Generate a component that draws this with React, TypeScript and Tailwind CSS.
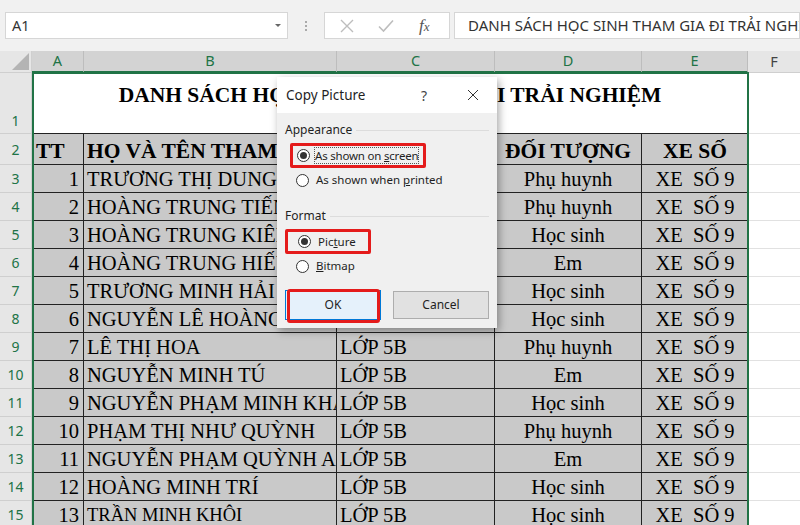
import React from 'react';

const rows: [number, string, string][] = [
  [1, 'TRƯƠNG THỊ DUNG', 'Phụ huynh'],
  [2, 'HOÀNG TRUNG TIẾN', 'Phụ huynh'],
  [3, 'HOÀNG TRUNG KIÊN', 'Học sinh'],
  [4, 'HOÀNG TRUNG HIẾU', 'Em'],
  [5, 'TRƯƠNG MINH HẢI', 'Học sinh'],
  [6, 'NGUYỄN LÊ HOÀNG NAM', 'Học sinh'],
  [7, 'LÊ THỊ HOA', 'Phụ huynh'],
  [8, 'NGUYỄN MINH TÚ', 'Em'],
  [9, 'NGUYỄN PHẠM MINH KHANG', 'Học sinh'],
  [10, 'PHẠM THỊ NHƯ QUỲNH', 'Phụ huynh'],
  [11, 'NGUYỄN PHẠM QUỲNH ANH', 'Em'],
  [12, 'HOÀNG MINH TRÍ', 'Học sinh'],
  [13, 'TRẦN MINH KHÔI', 'Học sinh'],
];

const serif = "font-['Liberation_Serif','Times_New_Roman',serif]";
const ui = "font-['Noto_Sans','Open_Sans',sans-serif]";

// gray table cell: bottom aligned like Excel
const cell = `bg-[#c9c9c9] border-b border-[#222] flex items-end pb-[1px] leading-[24px] whitespace-nowrap ${serif}`;

function Radio({ checked }: { checked?: boolean }) {
  return (
    <span className="w-[13px] h-[13px] rounded-full border border-[#333] bg-white flex items-center justify-center shrink-0">
      {checked && <span className="w-[7px] h-[7px] rounded-full bg-[#333]" />}
    </span>
  );
}

function RowHead({ n, tall }: { n: number; tall?: boolean }) {
  return (
    <div
      className={`bg-[#e6e6e6] border-b border-r border-[#cfcfcf] text-[#217346] text-[14px] flex justify-center ${ui} ${
        tall ? 'items-end pb-[2px]' : 'items-center'
      }`}
    >
      {n}
    </div>
  );
}

function Dialog() {
  return (
    <div className={`absolute left-[277px] top-[77px] w-[220px] h-[251px] bg-[#f0f0f0] shadow-[2px_3px_8px_rgba(0,0,0,0.35)] ${ui} text-[#1f1f1f]`}>
      {/* Title */}
      <div className="h-[36px] bg-white flex items-center pl-[9px] pr-[18px]">
        <span className="text-[13.5px] flex-1">Copy Picture</span>
        <span className="text-[14px] text-[#444] mr-[40px]">?</span>
        <svg width="12" height="12" viewBox="0 0 12 12" className="stroke-[#333]">
          <path d="M1 1 L11 11 M11 1 L1 11" strokeWidth="1" />
        </svg>
      </div>

      <div className="px-[8px] pt-[8px] text-[11.5px] whitespace-nowrap">
        <div className="flex items-center gap-[4px] text-[12px]">
          <span>Appearance</span>
          <span className="flex-1 h-px bg-[#dcdcdc]" />
        </div>
        <div className="mt-[4px] ml-[5px] w-[136px] h-[25px] border-[3px] border-[#e41b1b] rounded-[2px] flex items-center gap-[4px] pl-[4px]">
          <Radio checked />
          <span className="border border-dotted border-[#555] leading-[15px] tracking-[-0.2px]">
            As shown on <span className="underline">s</span>creen
          </span>
        </div>
        <div className="mt-[1px] ml-[11px] h-[22px] flex items-center gap-[7px]">
          <Radio />
          <span>
            As shown when <span className="underline">p</span>rinted
          </span>
        </div>

        <div className="mt-[16px] flex items-center gap-[4px] text-[12px]">
          <span>Format</span>
          <span className="flex-1 h-px bg-[#dcdcdc]" />
        </div>
        <div className="mt-[4px] w-[86px] h-[25px] border-[3px] border-[#e41b1b] rounded-[2px] flex items-center gap-[7px] pl-[10px]">
          <Radio checked />
          <span>
            Pic<span className="underline">t</span>ure
          </span>
        </div>
        <div className="mt-[1px] ml-[11px] h-[22px] flex items-center gap-[7px]">
          <Radio />
          <span>
            <span className="underline">B</span>itmap
          </span>
        </div>

        <div className="mt-[13px] flex items-center gap-[12px] text-[12px]">
          <div className="relative w-[96px] h-[30px] bg-[#e5f1fb] border border-[#0078d7] flex items-center justify-center">
            OK
            <div className="absolute left-[1px] -top-[2px] w-[93px] h-[34px] border-[3px] border-[#e41b1b] rounded-[3px]" />
          </div>
          <div className="w-[96px] h-[28px] bg-[#e1e1e1] border border-[#adadad] flex items-center justify-center">
            Cancel
          </div>
        </div>
      </div>
    </div>
  );
}

export default function App() {
  return (
    <div className="relative w-[800px] h-[525px] overflow-hidden bg-white">
      {/* Formula bar */}
      <div className={`h-[51px] bg-[#f1f1f1] flex items-start pt-[12px] ${ui}`}>
        <div className="ml-[5px] w-[283px] h-[27px] bg-white border border-[#d6d6d6] flex items-center pl-[6px] pr-[6px] text-[14.5px] text-[#333]">
          <span className="flex-1">A1</span>
          <span className="w-0 h-0 border-l-[3px] border-r-[3px] border-t-[3px] border-l-transparent border-r-transparent border-t-[#666]" />
        </div>
        <div className="w-[36px] h-[27px] flex flex-col items-center justify-center gap-[2px]">
          <span className="w-[2px] h-[2px] bg-[#aaa]" />
          <span className="w-[2px] h-[2px] bg-[#aaa]" />
          <span className="w-[2px] h-[2px] bg-[#aaa]" />
        </div>
        <div className="w-[126px] h-[27px] bg-white border border-[#d6d6d6] flex items-center">
          <svg width="14" height="14" viewBox="0 0 14 14" className="ml-[15px]">
            <path d="M1 1 L13 13 M13 1 L1 13" stroke="#bdbdbd" strokeWidth="1.4" fill="none" />
          </svg>
          <svg width="16" height="14" viewBox="0 0 16 14" className="ml-[24px]">
            <path d="M1 7.5 L5.5 12 L15 1.5" stroke="#bdbdbd" strokeWidth="1.6" fill="none" />
          </svg>
          <span className={`ml-[25px] text-[17px] italic text-[#555] ${serif}`}>
            f<span className="text-[13px]">x</span>
          </span>
        </div>
        <div className="ml-[4px] flex-1 h-[27px] bg-white border border-[#d6d6d6] flex items-center pl-[13px] text-[15px] text-[#333] whitespace-nowrap overflow-hidden">
          DANH SÁCH HỌC SINH THAM GIA ĐI TRẢI NGHIỆM
        </div>
      </div>

      {/* Sheet */}
      <div className="grid grid-cols-[32px_52px_253px_158px_147px_106px_1fr] grid-rows-[22px_61px_31px_repeat(13,28px)]">
        {/* Column headers */}
        <div className="bg-[#e6e6e6] border-r border-b border-[#cfcfcf] relative">
          <svg className="absolute right-[2px] bottom-[2px]" width="17" height="17" viewBox="0 0 17 17">
            <path d="M17 0 L17 17 L0 17 Z" fill="#b4b4b4" />
          </svg>
        </div>
        {['A', 'B', 'C', 'D', 'E'].map((c) => (
          <div
            key={c}
            className={`bg-[#d3d3d3] border-r border-[#bdbdbd] border-b-2 border-b-[#217346] text-[#217346] text-[14.5px] flex items-center justify-center ${ui}`}
          >
            {c}
          </div>
        ))}
        <div className={`bg-[#e6e6e6] border-b border-[#cfcfcf] text-[#444] text-[14.5px] flex items-center justify-center ${ui}`}>F</div>

        {/* Row 1 */}
        <RowHead n={1} tall />
        <div className={`col-span-5 bg-white border-b border-[#222] flex justify-center pt-[10px] leading-[24px] text-[21.5px] font-bold text-black whitespace-nowrap ${serif}`}>
          DANH SÁCH HỌC SINH THAM GIA ĐI TRẢI NGHIỆM
        </div>
        <div className="border-b border-[#e1e1e1]" />

        {/* Row 2 */}
        <RowHead n={2} />
        <div className={`${cell} border-r pl-[4px] text-[21.5px] font-bold`}>TT</div>
        <div className={`${cell} border-r pl-[3px] text-[21.5px] font-bold overflow-hidden`}>HỌ VÀ TÊN THAM GIA</div>
        <div className={`${cell} border-r justify-center text-[21.5px] font-bold`}>LỚP</div>
        <div className={`${cell} border-r justify-center text-[21.5px] font-bold`}>ĐỐI TƯỢNG</div>
        <div className={`${cell} justify-center text-[21.5px] font-bold`}>XE SỐ</div>
        <div className="border-b border-[#e1e1e1]" />

        {rows.map(([n, name, role], i) => (
          <React.Fragment key={n}>
            <RowHead n={i + 3} />
            <div className={`${cell} border-r justify-end pr-[4px] text-[20.5px]`}>{n}</div>
            <div className={`${cell} border-r pl-[3px] overflow-hidden ${n === 13 ? 'text-[18.5px]' : 'text-[20.5px]'}`}>{name}</div>
            <div className={`${cell} border-r pl-[3px] text-[20.5px]`}>LỚP 5B</div>
            <div className={`${cell} border-r justify-center text-[20.5px]`}>{role}</div>
            <div className={`${cell} justify-center text-[20.5px] whitespace-pre`}>XE  SỐ 9</div>
            <div className="border-b border-[#e1e1e1]" />
          </React.Fragment>
        ))}
      </div>

      {/* Selection outline */}
      <div className="absolute left-[32px] top-[72px] w-[717px] h-[470px] border-2 border-[#217346] pointer-events-none" />

      <Dialog />
    </div>
  );
}
